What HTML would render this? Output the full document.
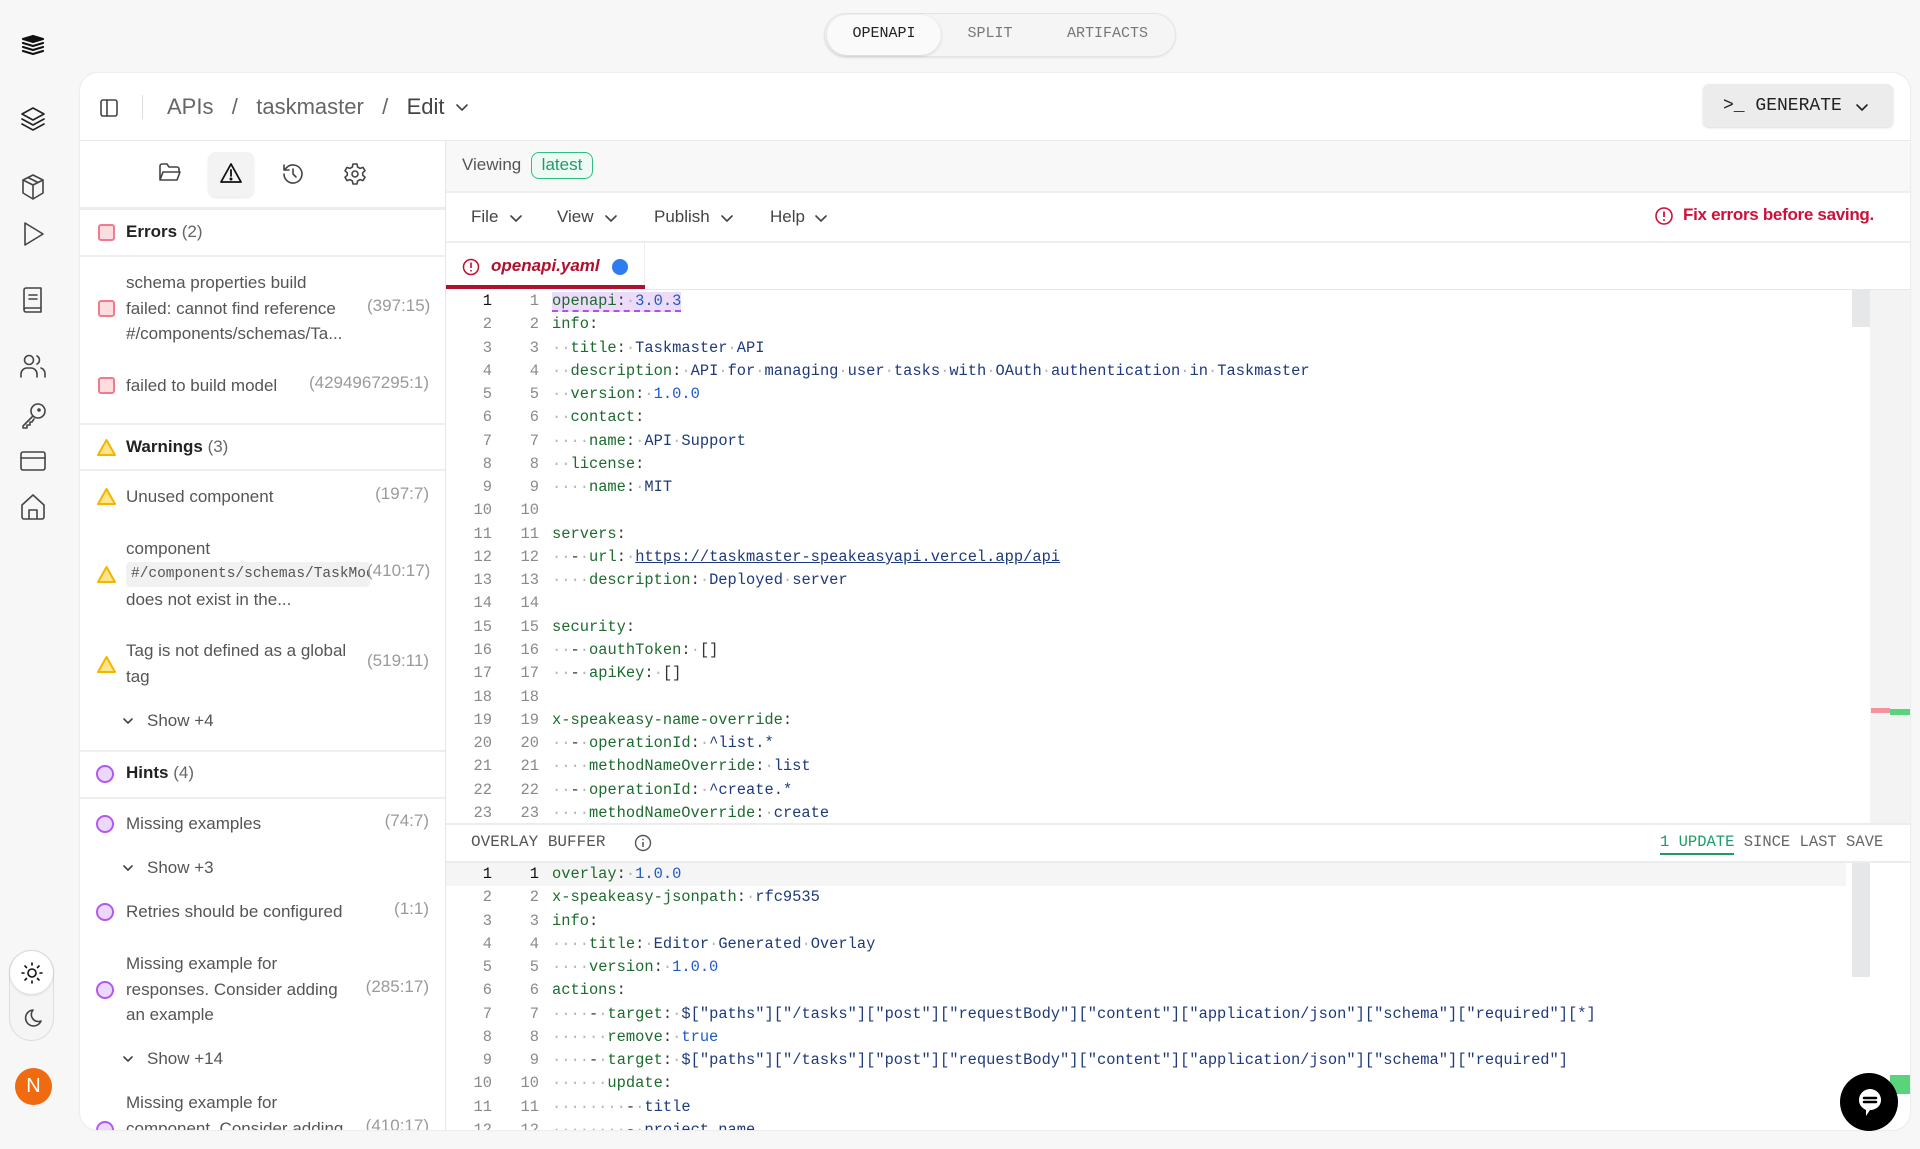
<!DOCTYPE html>
<html><head><meta charset="utf-8"><style>
*{box-sizing:border-box;margin:0;padding:0}
body{width:1920px;height:1149px;background:#f7f7f7;font-family:"Liberation Sans",sans-serif;position:relative;overflow:hidden;color:#333}
.a{position:absolute}
.mono{font-family:"Liberation Mono",monospace}
.ic{position:absolute;fill:none;stroke:#444;stroke-width:1.6;stroke-linecap:round;stroke-linejoin:round}
.card{left:80px;top:73px;width:1830px;height:1057px;background:#fff;border-radius:18px;box-shadow:0 0 2px rgba(0,0,0,.12);overflow:hidden}
.lp{font-size:17px;color:#555;line-height:25.7px}
.hr{position:absolute;left:0;height:2px;background:#eee}
.code{position:absolute;left:0;font-family:"Liberation Mono",monospace;font-size:15.4px;line-height:23.27px;white-space:normal}
.r{position:relative;height:23.27px;padding-left:106px;white-space:pre}
.r i,.r b{position:absolute;top:0;width:40px;text-align:right;font-style:normal;font-weight:normal;color:#8a8a8a}
.r i{left:6px}.r b{left:53px}
.k{color:#1d6b2e}.v{color:#1e3a7b}.n{color:#1f5bc4}.d{color:#b5b5b5}.p{color:#333}
.sq{position:absolute;width:17px;height:17px;border:2px solid #f27a8a;background:#fcdde0;border-radius:3px}
.ci{position:absolute;width:18px;height:18px;border:2px solid #b457f0;background:#ecd8fb;border-radius:50%}
</style></head><body>

<div class="a" style="left:824px;top:13px;width:352px;height:44px;border-radius:22px;background:#f5f5f5;border:1px solid #e4e4e4;box-shadow:0 1px 2px rgba(0,0,0,.08)"></div>
<div class="a" style="left:827px;top:15px;width:114px;height:40px;border-radius:20px;background:#fafafa;box-shadow:0 1px 3px rgba(0,0,0,.15)"></div>
<div class="a mono" style="left:827px;top:25px;width:114px;text-align:center;font-size:15px;color:#222">OPENAPI</div>
<div class="a mono" style="left:960px;top:25px;width:60px;text-align:center;font-size:15px;color:#777">SPLIT</div>
<div class="a mono" style="left:1060px;top:25px;width:95px;text-align:center;font-size:15px;color:#777">ARTIFACTS</div>

<svg class="ic" style="left:20px;top:33px" width="26" height="26" viewBox="0 0 26 26"><g stroke="#111" stroke-width="2.2"><path d="M3 6l10-3 10 3-10 3z" fill="#111"/><path d="M3 10l10 3 10-3M3 14l10 3 10-3M3 18l10 3 10-3"/></g></svg>
<svg class="ic" style="left:19px;top:105px" width="28" height="28" viewBox="0 0 28 28"><g stroke="#222"><path d="M3 9l11-6 11 6-11 6z"/><path d="M3 14l11 6 11-6M3 19l11 6 11-6"/></g></svg>
<svg class="ic" style="left:20px;top:173px" width="26" height="28" viewBox="0 0 26 28"><path d="M13 2l10 5v13l-10 6-10-6V7z M3 7l10 5 10-5 M13 12v14 M8 4.5l10 5"/></svg>
<svg class="ic" style="left:22px;top:221px" width="24" height="26" viewBox="0 0 24 26"><path d="M3 2l18 11L3 24z"/></svg>
<svg class="ic" style="left:21px;top:286px" width="24" height="28" viewBox="0 0 24 28"><path d="M3 4a2 2 0 0 1 2-2h15v20H5a2 2 0 0 0-2 2zM3 24a2 2 0 0 0 2 2h15v-4M8 9h8M8 13h8"/></svg>
<svg class="ic" style="left:19px;top:353px" width="28" height="26" viewBox="0 0 28 26"><circle cx="10" cy="7" r="4.5"/><path d="M2 24v-3a6 6 0 0 1 6-6h4a6 6 0 0 1 6 6v3M18 3a4.5 4.5 0 0 1 0 8M22 15a6 6 0 0 1 4 6v3"/></svg>
<svg class="ic" style="left:20px;top:401px" width="28" height="28" viewBox="0 0 28 28"><circle cx="18" cy="10" r="7"/><circle cx="19" cy="9" r="1" fill="#444"/><path d="M13 15L3 25v2h4v-3h3v-3h2l2-3"/></svg>
<svg class="ic" style="left:19px;top:450px" width="28" height="22" viewBox="0 0 28 22"><rect x="2" y="2" width="24" height="18" rx="2"/><path d="M2 8h24"/></svg>
<svg class="ic" style="left:20px;top:493px" width="26" height="28" viewBox="0 0 26 28"><path d="M2 12L13 2l11 10v12a2 2 0 0 1-2 2H4a2 2 0 0 1-2-2zM9 26v-9h8v9"/></svg>
<div class="a" style="left:9px;top:950px;width:45px;height:91px;border-radius:23px;border:1px solid #ddd;background:#f5f5f5"></div>
<div class="a" style="left:10px;top:951px;width:43px;height:43px;border-radius:22px;background:#fff;box-shadow:0 1px 3px rgba(0,0,0,.15)"></div>
<svg class="ic" style="left:21px;top:962px" width="22" height="22" viewBox="0 0 22 22"><g stroke="#111"><circle cx="11" cy="11" r="4"/><path d="M11 1v2M11 19v2M1 11h2M19 11h2M4 4l1.5 1.5M16.5 16.5L18 18M4 18l1.5-1.5M16.5 5.5L18 4"/></g></svg>
<svg class="ic" style="left:21px;top:1008px" width="22" height="22" viewBox="0 0 22 22"><path d="M12 2a8 8 0 1 0 8 11A7 7 0 0 1 12 2z"/></svg>
<div class="a" style="left:15px;top:1068px;width:37px;height:37px;border-radius:50%;background:#f06a0f;color:#fff;font-size:20px;text-align:center;line-height:37px">N</div>

<div class="a card">
 <svg class="ic" style="left:19px;top:25px" width="20" height="20" viewBox="0 0 20 20"><rect x="2" y="2" width="16" height="16" rx="2"/><path d="M8 2v16"/></svg>
 <div class="a" style="left:62px;top:22px;width:1px;height:24px;background:#ddd"></div>
 <div class="a" style="left:87px;top:21px;font-size:22px;color:#666;white-space:pre">APIs   /   taskmaster   /   <span style="color:#444">Edit</span></div>
 <svg class="ic" style="left:375px;top:30px" width="14" height="10" viewBox="0 0 14 10"><path d="M2 2l5 5 5-5"/></svg>
 <div class="a" style="left:1623px;top:11px;width:190px;height:43px;background:#ececec;border-radius:6px;box-shadow:0 1px 2px rgba(0,0,0,.15)"></div>
 <div class="a mono" style="left:1643px;top:23px;font-size:18px;color:#222;white-space:pre">&gt;_ GENERATE</div>
 <svg class="ic" style="left:1775px;top:30px" width="14" height="10" viewBox="0 0 14 10"><path d="M2 2l5 5 5-5" stroke="#222"/></svg>
 <div class="hr" style="top:67px;width:1830px;height:1px;background:#e8e8e8"></div>

 <div class="a" style="left:365px;top:67px;width:1px;height:990px;background:#e6e6e6"></div>
 <svg class="ic" style="left:78px;top:89px" width="24" height="22" viewBox="0 0 24 22"><path d="M2 18V4a2 2 0 0 1 2-2h5l2 3h8a2 2 0 0 1 2 2v3M2 18l3-8h17l-3 8z"/></svg>
 <div class="a" style="left:128px;top:79px;width:46px;height:45px;border-radius:8px;background:#f3f3f3;box-shadow:0 1px 2px rgba(0,0,0,.1)"></div>
 <svg class="ic" style="left:139px;top:89px" width="24" height="22" viewBox="0 0 24 22"><g stroke="#111" stroke-width="1.8"><path d="M12 2L2 20h20z M12 8v6"/><circle cx="12" cy="17" r=".6" fill="#111"/></g></svg>
 <svg class="ic" style="left:201px;top:89px" width="24" height="24" viewBox="0 0 24 24"><path d="M3 12a9 9 0 1 0 3-6.7L3 8M3 3v5h5M12 7v5l3 3"/></svg>
 <svg class="ic" style="left:263px;top:89px" width="24" height="24" viewBox="0 0 24 24"><circle cx="12" cy="12" r="3"/><path d="M10 2h4l.6 3 2.5 1.4 2.9-1 2 3.4-2.3 2v2.4l2.3 2-2 3.4-2.9-1L14.6 19 14 22h-4l-.6-3-2.5-1.4-2.9 1-2-3.4 2.3-2v-2.4L2 8.8l2-3.4 2.9 1L9.4 5z"/></svg>
 <div class="hr" style="top:134px;width:365px;height:3px;background:#ececec"></div>

 <div class="sq" style="left:18px;top:151px"></div>
 <div class="a" style="left:46px;top:149px;font-size:17px;color:#222"><b style="font-weight:600">Errors</b> <span style="color:#666">(2)</span></div>
 <div class="hr" style="top:182px;width:365px"></div>
 <div class="sq" style="left:18px;top:227px"></div>
 <div class="a lp" style="left:46px;top:197px;width:222px">schema properties build failed: cannot find reference #/components/schemas/Ta...</div>
 <div class="a" style="left:287px;top:223px;font-size:17px;color:#9a9a9a;width:62px;text-align:right">(397:15)</div>
 <div class="sq" style="left:18px;top:304px"></div>
 <div class="a lp" style="left:46px;top:300px">failed to build model</div>
 <div class="a" style="left:220px;top:300px;font-size:17px;color:#9a9a9a;width:129px;text-align:right">(4294967295:1)</div>
 <div class="hr" style="top:350px;width:365px"></div>

 <svg class="a" style="left:16px;top:365px" width="21" height="19" viewBox="0 0 21 19"><path d="M10.5 2L2 17h17z" fill="#fde58a" stroke="#f4b400" stroke-width="2" stroke-linejoin="round"/></svg>
 <div class="a" style="left:46px;top:364px;font-size:17px;color:#222"><b style="font-weight:600">Warnings</b> <span style="color:#666">(3)</span></div>
 <div class="hr" style="top:396px;width:365px"></div>
 <svg class="a" style="left:16px;top:414px" width="21" height="19" viewBox="0 0 21 19"><path d="M10.5 2L2 17h17z" fill="#fde58a" stroke="#f4b400" stroke-width="2" stroke-linejoin="round"/></svg>
 <div class="a lp" style="left:46px;top:411px">Unused component</div>
 <div class="a" style="left:287px;top:411px;font-size:17px;color:#9a9a9a;width:62px;text-align:right">(197:7)</div>
 <svg class="a" style="left:16px;top:492px" width="21" height="19" viewBox="0 0 21 19"><path d="M10.5 2L2 17h17z" fill="#fde58a" stroke="#f4b400" stroke-width="2" stroke-linejoin="round"/></svg>
 <div class="a lp" style="left:46px;top:463px">component</div>
 <div class="a mono" style="left:46px;top:489px;width:244px;height:25px;background:#f1f1f1;border-radius:4px;font-size:14.5px;color:#555;line-height:25px;padding-left:5px;overflow:hidden;white-space:nowrap">#/components/schemas/TaskModel</div>
 <div class="a lp" style="left:46px;top:514px">does not exist in the...</div>
 <div class="a" style="left:287px;top:488px;font-size:17px;color:#9a9a9a;width:62px;text-align:right">(410:17)</div>
 <svg class="a" style="left:16px;top:582px" width="21" height="19" viewBox="0 0 21 19"><path d="M10.5 2L2 17h17z" fill="#fde58a" stroke="#f4b400" stroke-width="2" stroke-linejoin="round"/></svg>
 <div class="a lp" style="left:46px;top:565px;width:240px">Tag is not defined as a global tag</div>
 <div class="a" style="left:287px;top:578px;font-size:17px;color:#9a9a9a;width:62px;text-align:right">(519:11)</div>
 <svg class="ic" style="left:42px;top:644px" width="12" height="8" viewBox="0 0 12 8"><path d="M2 2l4 4 4-4"/></svg>
 <div class="a lp" style="left:67px;top:635px">Show +4</div>
 <div class="hr" style="top:677px;width:365px"></div>

 <div class="ci" style="left:16px;top:692px"></div>
 <div class="a" style="left:46px;top:690px;font-size:17px;color:#222"><b style="font-weight:600">Hints</b> <span style="color:#666">(4)</span></div>
 <div class="hr" style="top:724px;width:365px"></div>
 <div class="ci" style="left:16px;top:742px"></div>
 <div class="a lp" style="left:46px;top:738px">Missing examples</div>
 <div class="a" style="left:287px;top:738px;font-size:17px;color:#9a9a9a;width:62px;text-align:right">(74:7)</div>
 <svg class="ic" style="left:42px;top:791px" width="12" height="8" viewBox="0 0 12 8"><path d="M2 2l4 4 4-4"/></svg>
 <div class="a lp" style="left:67px;top:782px">Show +3</div>
 <div class="ci" style="left:16px;top:830px"></div>
 <div class="a lp" style="left:46px;top:826px">Retries should be configured</div>
 <div class="a" style="left:287px;top:826px;font-size:17px;color:#9a9a9a;width:62px;text-align:right">(1:1)</div>
 <div class="ci" style="left:16px;top:908px"></div>
 <div class="a lp" style="left:46px;top:878px;width:222px">Missing example for responses. Consider adding an example</div>
 <div class="a" style="left:280px;top:904px;font-size:17px;color:#9a9a9a;width:69px;text-align:right">(285:17)</div>
 <svg class="ic" style="left:42px;top:982px" width="12" height="8" viewBox="0 0 12 8"><path d="M2 2l4 4 4-4"/></svg>
 <div class="a lp" style="left:67px;top:973px">Show +14</div>
 <div class="ci" style="left:16px;top:1048px"></div>
 <div class="a lp" style="left:46px;top:1017px;width:222px">Missing example for component. Consider adding</div>
 <div class="a" style="left:280px;top:1043px;font-size:17px;color:#9a9a9a;width:69px;text-align:right">(410:17)</div>

 <div class="a" style="left:366px;top:68px;width:1464px;height:50px;background:#f8f8f8"></div>
 <div class="a" style="left:382px;top:82px;font-size:17px;color:#555">Viewing</div>
 <div class="a" style="left:451px;top:79px;width:62px;height:27px;border:1.5px solid #2fbf85;border-radius:8px;background:#eefaf4;color:#1e9c68;font-size:17px;text-align:center;line-height:24px">latest</div>
 <div class="hr" style="left:366px;top:118px;width:1464px;height:2px"></div>
 <div class="a" style="left:391px;top:134px;font-size:17px;color:#444">File</div>
 <svg class="ic" style="left:429px;top:141px" width="14" height="10" viewBox="0 0 14 10"><path d="M2 2l5 5 5-5"/></svg>
 <div class="a" style="left:477px;top:134px;font-size:17px;color:#444">View</div>
 <svg class="ic" style="left:524px;top:141px" width="14" height="10" viewBox="0 0 14 10"><path d="M2 2l5 5 5-5"/></svg>
 <div class="a" style="left:574px;top:134px;font-size:17px;color:#444">Publish</div>
 <svg class="ic" style="left:640px;top:141px" width="14" height="10" viewBox="0 0 14 10"><path d="M2 2l5 5 5-5"/></svg>
 <div class="a" style="left:690px;top:134px;font-size:17px;color:#444">Help</div>
 <svg class="ic" style="left:734px;top:141px" width="14" height="10" viewBox="0 0 14 10"><path d="M2 2l5 5 5-5"/></svg>
 <svg class="a" style="left:1574px;top:133px" width="20" height="20" viewBox="0 0 20 20"><circle cx="10" cy="10" r="8" fill="none" stroke="#d0103a" stroke-width="1.6"/><path d="M10 5.5v5.5" stroke="#d0103a" stroke-width="1.8"/><circle cx="10" cy="14" r="1" fill="#d0103a"/></svg>
 <div class="a" style="left:1603px;top:132px;font-size:17px;color:#d0103a;font-weight:600;letter-spacing:-0.3px">Fix errors before saving.</div>
 <div class="hr" style="left:366px;top:168px;width:1464px;height:2px"></div>
 <div class="a" style="left:366px;top:170px;width:199px;height:47px;border-right:1px solid #eee"></div>
 <svg class="a" style="left:382px;top:185px" width="18" height="18" viewBox="0 0 18 18"><circle cx="9" cy="9" r="7.5" fill="none" stroke="#c0102f" stroke-width="1.5"/><path d="M9 4.5v5.5" stroke="#c0102f" stroke-width="1.6"/><circle cx="9" cy="12.8" r=".9" fill="#c0102f"/></svg>
 <div class="a" style="left:411px;top:183px;font-size:17px;color:#b0102e;font-style:italic;font-weight:600">openapi.yaml</div>
 <div class="a" style="left:532px;top:186px;width:16px;height:16px;border-radius:50%;background:#2f7bf0"></div>
 <div class="a" style="left:366px;top:212px;width:199px;height:4px;background:#b0102e"></div>
 <div class="hr" style="left:565px;top:216px;width:1265px;height:1px;background:#e8e8e8"></div>

 <div class="a" style="left:366px;top:217px;width:1464px;height:533px;overflow:hidden">
  <div class="a" style="left:1406px;top:0;width:18px;height:37px;background:#e6e7e9"></div>
  <div class="a" style="left:1424px;top:0;width:40px;height:533px;background:#f3f3f3"></div>
  <div class="a" style="left:1425px;top:418px;width:19px;height:5px;background:#f4939d"></div>
  <div class="a" style="left:1444px;top:419px;width:20px;height:6px;background:#5ad47a"></div>
  <div class="code" style="top:0;width:1400px"><div class="r"><i style="color:#111">1</i><b>1</b><span style="background:#ecdcfa;border-bottom:2px dashed #b04ef0"><span class="k">openapi</span><span class="p">:</span><span class="d">·</span><span class="n">3.0.3</span></span></div><div class="r"><i>2</i><b>2</b><span class="k">info</span>:</div><div class="r"><i>3</i><b>3</b><span class="d">··</span><span class="k">title</span>:<span class="d">·</span><span class="v">Taskmaster<span class="d">·</span>API</span></div><div class="r"><i>4</i><b>4</b><span class="d">··</span><span class="k">description</span>:<span class="d">·</span><span class="v">API<span class="d">·</span>for<span class="d">·</span>managing<span class="d">·</span>user<span class="d">·</span>tasks<span class="d">·</span>with<span class="d">·</span>OAuth<span class="d">·</span>authentication<span class="d">·</span>in<span class="d">·</span>Taskmaster</span></div><div class="r"><i>5</i><b>5</b><span class="d">··</span><span class="k">version</span>:<span class="d">·</span><span class="n">1.0.0</span></div><div class="r"><i>6</i><b>6</b><span class="d">··</span><span class="k">contact</span>:</div><div class="r"><i>7</i><b>7</b><span class="d">····</span><span class="k">name</span>:<span class="d">·</span><span class="v">API<span class="d">·</span>Support</span></div><div class="r"><i>8</i><b>8</b><span class="d">··</span><span class="k">license</span>:</div><div class="r"><i>9</i><b>9</b><span class="d">····</span><span class="k">name</span>:<span class="d">·</span><span class="v">MIT</span></div><div class="r"><i>10</i><b>10</b></div><div class="r"><i>11</i><b>11</b><span class="k">servers</span>:</div><div class="r"><i>12</i><b>12</b><span class="d">··</span>-<span class="d">·</span><span class="k">url</span>:<span class="d">·</span><span class="v" style="text-decoration:underline">https://taskmaster-speakeasyapi.vercel.app/api</span></div><div class="r"><i>13</i><b>13</b><span class="d">····</span><span class="k">description</span>:<span class="d">·</span><span class="v">Deployed<span class="d">·</span>server</span></div><div class="r"><i>14</i><b>14</b></div><div class="r"><i>15</i><b>15</b><span class="k">security</span>:</div><div class="r"><i>16</i><b>16</b><span class="d">··</span>-<span class="d">·</span><span class="k">oauthToken</span>:<span class="d">·</span>[]</div><div class="r"><i>17</i><b>17</b><span class="d">··</span>-<span class="d">·</span><span class="k">apiKey</span>:<span class="d">·</span>[]</div><div class="r"><i>18</i><b>18</b></div><div class="r"><i>19</i><b>19</b><span class="k">x-speakeasy-name-override</span>:</div><div class="r"><i>20</i><b>20</b><span class="d">··</span>-<span class="d">·</span><span class="k">operationId</span>:<span class="d">·</span><span class="v">^list.*</span></div><div class="r"><i>21</i><b>21</b><span class="d">····</span><span class="k">methodNameOverride</span>:<span class="d">·</span><span class="v">list</span></div><div class="r"><i>22</i><b>22</b><span class="d">··</span>-<span class="d">·</span><span class="k">operationId</span>:<span class="d">·</span><span class="v">^create.*</span></div><div class="r"><i>23</i><b>23</b><span class="d">····</span><span class="k">methodNameOverride</span>:<span class="d">·</span><span class="v">create</span></div></div>
 </div>

 <div class="a" style="left:366px;top:750px;width:1464px;height:40px;background:#fff;border-top:2px solid #ececec;border-bottom:2px solid #ececec"></div>
 <div class="a mono" style="left:391px;top:760px;font-size:16px;color:#555">OVERLAY BUFFER</div>
 <svg class="a" style="left:554px;top:761px" width="18" height="18" viewBox="0 0 18 18"><circle cx="9" cy="9" r="7.5" fill="none" stroke="#555" stroke-width="1.4"/><path d="M9 8v5" stroke="#555" stroke-width="1.5"/><circle cx="9" cy="5.5" r=".9" fill="#555"/></svg>
 <div class="a mono" style="left:1580px;top:760px;font-size:15.5px;color:#666;white-space:pre"><span style="color:#1e9c68;border-bottom:2px solid #1e9c68;padding-bottom:2px">1 UPDATE</span> SINCE LAST SAVE</div>

 <div class="a" style="left:366px;top:790px;width:1464px;height:267px;overflow:hidden">
  <div class="a" style="left:0;top:0;width:1400px;height:23px;background:#f5f5f5"></div>
  <div class="a" style="left:1406px;top:0;width:18px;height:114px;background:#e6e7e9"></div>
  <div class="a" style="left:1444px;top:212px;width:20px;height:19px;background:#5ad47a"></div>
  <div class="code" style="top:0;width:1400px"><div class="r"><i style="color:#111">1</i><b style="color:#111">1</b><span class="k">overlay</span>:<span class="d">·</span><span class="n">1.0.0</span></div><div class="r"><i>2</i><b>2</b><span class="k">x-speakeasy-jsonpath</span>:<span class="d">·</span><span class="v">rfc9535</span></div><div class="r"><i>3</i><b>3</b><span class="k">info</span>:</div><div class="r"><i>4</i><b>4</b><span class="d">····</span><span class="k">title</span>:<span class="d">·</span><span class="v">Editor<span class="d">·</span>Generated<span class="d">·</span>Overlay</span></div><div class="r"><i>5</i><b>5</b><span class="d">····</span><span class="k">version</span>:<span class="d">·</span><span class="n">1.0.0</span></div><div class="r"><i>6</i><b>6</b><span class="k">actions</span>:</div><div class="r"><i>7</i><b>7</b><span class="d">····</span>-<span class="d">·</span><span class="k">target</span>:<span class="d">·</span><span class="v">$["paths"]["/tasks"]["post"]["requestBody"]["content"]["application/json"]["schema"]["required"][*]</span></div><div class="r"><i>8</i><b>8</b><span class="d">······</span><span class="k">remove</span>:<span class="d">·</span><span class="n">true</span></div><div class="r"><i>9</i><b>9</b><span class="d">····</span>-<span class="d">·</span><span class="k">target</span>:<span class="d">·</span><span class="v">$["paths"]["/tasks"]["post"]["requestBody"]["content"]["application/json"]["schema"]["required"]</span></div><div class="r"><i>10</i><b>10</b><span class="d">······</span><span class="k">update</span>:</div><div class="r"><i>11</i><b>11</b><span class="d">········</span>-<span class="d">·</span><span class="v">title</span></div><div class="r"><i>12</i><b>12</b><span class="d">········</span>-<span class="d">·</span><span class="v">project_name</span></div></div>
 </div>
</div>

<div class="a" style="left:1840px;top:1073px;width:58px;height:58px;border-radius:50%;background:#000"></div>
<svg class="a" style="left:1855px;top:1087px" width="30" height="32" viewBox="0 0 30 32"><path d="M4 13a11 11 0 0 1 22 0c0 6-5 10-11 10l-4 6v-6C7 21 4 18 4 13z" fill="#fff"/><path d="M9 11h12M9 15h12" stroke="#000" stroke-width="2.5" stroke-linecap="round"/></svg>
</body></html>
